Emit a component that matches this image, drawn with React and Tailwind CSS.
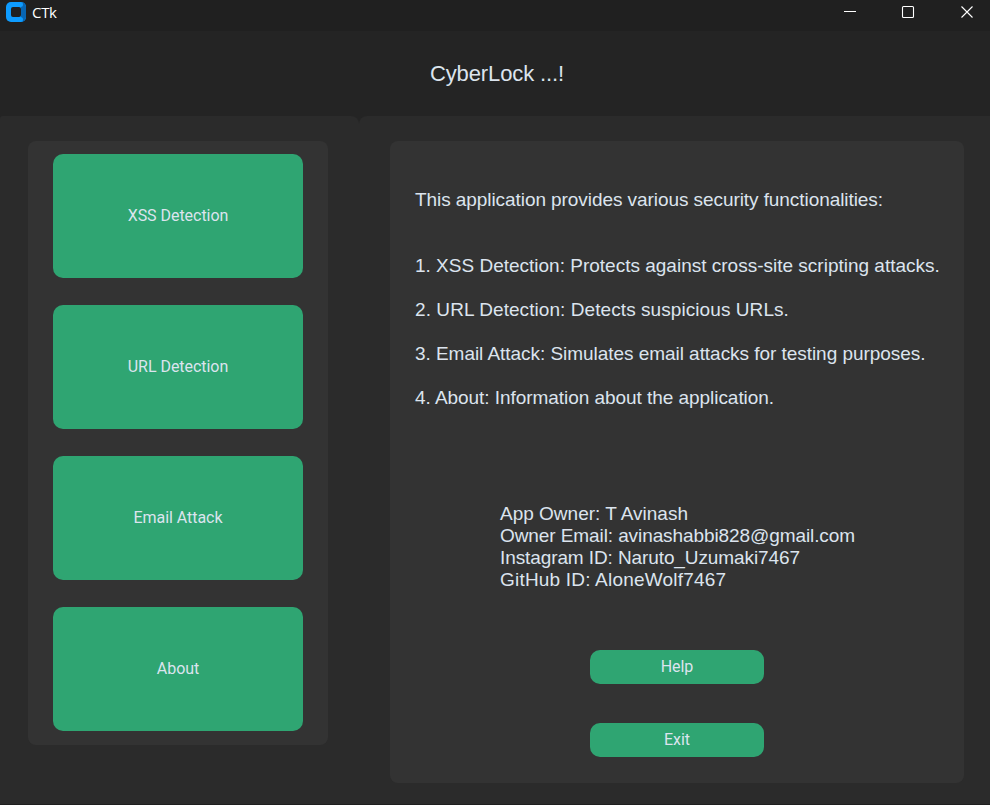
const actions = ["XSS Detection", "URL Detection", "Email Attack", "About"];

const features = [
  { text: "1. XSS Detection: Protects against cross-site scripting attacks.", tracking: "tracking-normal" },
  { text: "2. URL Detection: Detects suspicious URLs.", tracking: "tracking-[0.07px]" },
  { text: "3. Email Attack: Simulates email attacks for testing purposes.", tracking: "tracking-[-0.045px]" },
  { text: "4. About: Information about the application.", tracking: "tracking-[-0.05px]" },
];

const owner = [
  { text: "App Owner: T Avinash", tracking: "tracking-normal" },
  { text: "Owner Email: avinashabbi828@gmail.com", tracking: "tracking-[-0.09px]" },
  { text: "Instagram ID: Naruto_Uzumaki7467", tracking: "tracking-[-0.1px]" },
  { text: "GitHub ID: AloneWolf7467", tracking: "tracking-[0.2px]" },
];

function Logo() {
  return (
    <svg width="20" height="20" viewBox="0 0 20 20">
      <rect width="20" height="20" rx="5" fill="#0e9cff" />
      <path d="M15 0a5 5 0 0 1 5 5v10a5 5 0 0 1-5 5z" fill="#0765b3" />
      <path d="M13 0h1.500a2.500 2.500 0 0 1 0 5H13zM13 15h1.500a2.500 2.500 0 0 1 0 5H13z" fill="#0e9cff" />
      <rect x="5" y="5" width="10" height="10" rx="2" fill="#202020" />
    </svg>
  );
}

function TitleBar() {
  return (
    <div className="flex h-[31px] shrink-0 justify-between bg-[#202020]">
      <div className="flex items-start pl-1.5 pt-0.5">
        <Logo />
        <span className="ml-1.5 font-['Open_Sans',sans-serif] text-[15px] leading-5 tracking-[-0.3px] text-white">CTk</span>
      </div>
      <svg width="146" height="24" viewBox="0 0 146 24" fill="none" stroke="#fff">
        <path d="M0 11.500h12" />
        <rect x="58.500" y="6.500" width="11" height="11" rx="1" strokeWidth="1.100" />
        <path d="M117.500 6.500l11 11M128.500 6.500l-11 11" strokeWidth="1.100" />
      </svg>
    </div>
  );
}

export default function App() {
  return (
    <div className="flex h-[805px] w-[990px] flex-col overflow-hidden border-b border-[#1f1f1f] bg-[#242424] font-['Liberation_Sans',Arial,sans-serif] text-[#dce4ee]">
      <TitleBar />
      <header className="flex h-[85px] shrink-0 justify-center pl-1 pt-[30px]">
        <h1 className="text-[22px] leading-[26px] tracking-[-0.12px]">CyberLock ...!</h1>
      </header>
      <div className="flex min-h-0 flex-1">
        <aside className="w-[359px] rounded-tl-[3px] rounded-tr-lg bg-[#2b2b2b] pl-7 pt-[25px]">
          <nav className="flex h-[604px] w-[300px] flex-col gap-[27px] rounded-lg bg-[#333333] px-[25px] pt-[13px]">
            {actions.map((label) => (
              <button key={label} className="h-[124px] shrink-0 rounded-[10px] bg-[#2fa572] font-[Roboto,sans-serif] text-[16px] leading-5 tracking-[-0.04px]">
                {label}
              </button>
            ))}
          </nav>
        </aside>
        <main className="flex-1 rounded-tl-lg bg-[#2b2b2b] pl-[31px] pt-[25px]">
          <section className="flex h-[642px] w-[574px] flex-col items-center rounded-lg bg-[#333333] text-[19px] leading-[22px] whitespace-nowrap">
            <div className="mt-12 w-[524px]">
              <p className="tracking-[-0.07px]">This application provides various security functionalities:</p>
              <div className="mt-11 flex flex-col gap-[22px]">
                {features.map(({ text, tracking }) => (
                  <p key={text} className={tracking}>{text}</p>
                ))}
              </div>
            </div>
            <div className="mt-[94px] w-[354px]">
              {owner.map(({ text, tracking }) => (
                <p key={text} className={tracking}>{text}</p>
              ))}
            </div>
            <div className="mt-[59px] flex flex-col gap-[39px] font-[Roboto,sans-serif] text-[16px] leading-5 tracking-[-0.06px]">
              <button className="h-[34px] w-[174px] rounded-[10px] bg-[#2fa572]">Help</button>
              <button className="h-[34px] w-[174px] rounded-[10px] bg-[#2fa572]">Exit</button>
            </div>
          </section>
        </main>
      </div>
    </div>
  );
}
